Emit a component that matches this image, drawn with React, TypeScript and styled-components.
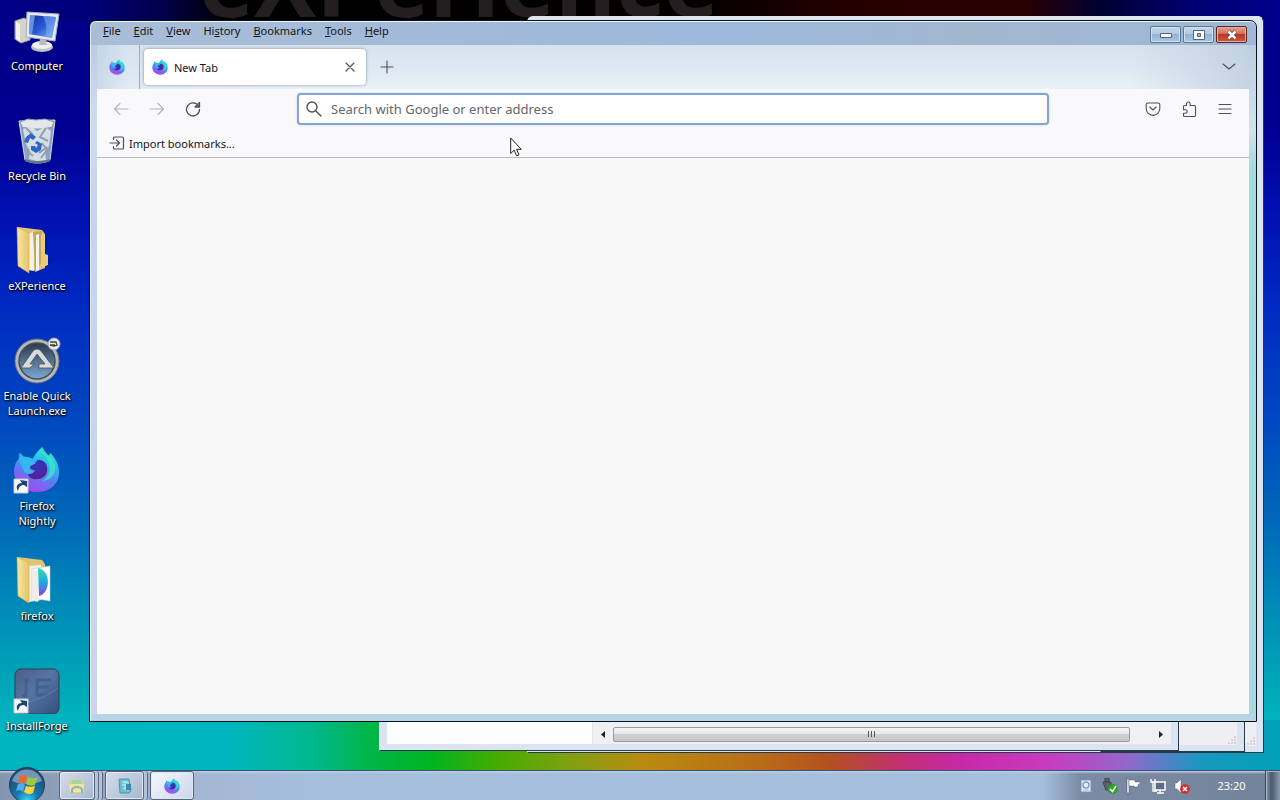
import React from 'react';
import styled, { createGlobalStyle } from 'styled-components';

const GlobalStyle = createGlobalStyle`
  *, *::before, *::after { box-sizing: border-box; }
  html, body { margin: 0; height: 100%; }
  body {
    font-family: "Noto Sans", "Open Sans", sans-serif;
    font-size: 11px;
    line-height: 15px;
    color: #15141a;
  }
  button {
    font: inherit;
    color: inherit;
    background: none;
    border: 0;
    padding: 0;
  }
`;

const Screen = styled.div`
  display: flex;
  flex-direction: column;
  min-height: 100vh;
  overflow: hidden;
`;

const Desktop = styled.main`
  position: relative;
  flex: 1;
  overflow: hidden;
  background:
    linear-gradient(to right, #00b4c0 0, #00b6be 230px, #00b890 310px, #00b648 370px, #00b420 430px, #48ac00 500px, #80a010 570px, #b88c10 640px, #b86c18 760px, #b45020 830px, #c03070 900px, #c828a8 960px, #c83cc0 1050px, #9068cc 1130px, #1898c0 1200px, #00a0b8 100%) no-repeat 0 100% / 100% 50px,
    linear-gradient(to right, #000088 0, #000078 90px, #00004c 160px, #000 230px, #050000 700px, #250000 850px, #2a0000 1020px, #000030 1100px, #000070 1190px, #00008c 100%) no-repeat 0 0 / 100% 22px,
    linear-gradient(to bottom, #000088 0, #000090 130px, #0010b0 210px, #0028c0 300px, #0048c0 420px, #0068b8 520px, #0090b8 620px, #00a8b8 690px, #00b2be calc(100% - 50px));
`;

const WallpaperText = styled.p`
  position: absolute;
  left: 199px;
  top: -79px;
  margin: 0;
  font-family: "Open Sans", sans-serif;
  font-size: 93px;
  line-height: 120px;
  font-weight: 700;
  color: #231f20;
`;

const IconColumn = styled.ul`
  position: relative;
  display: flex;
  flex-direction: column;
  width: 74px;
  margin: 0;
  padding: 6px 0 0;
  list-style: none;
`;

const IconCell = styled.li`
  height: 110px;
  &:last-child { height: auto; }
`;

const Shortcut = styled.button`
  display: flex;
  flex-direction: column;
  align-items: center;
  gap: 4px;
  width: 100%;
  color: #fff;
  text-align: center;
  text-shadow: 1px 1px 2px #000, 0 1px 2px #000;
  svg { display: block; }
`;

interface Frame { $left: number; $right: number; $top: number; $bottom: number }

const BackWindow = styled.section<Frame>`
  position: absolute;
  left: ${(p) => p.$left}px;
  right: ${(p) => p.$right}px;
  top: ${(p) => p.$top}px;
  bottom: ${(p) => p.$bottom}px;
  display: flex;
  flex-direction: column;
  justify-content: flex-end;
  padding: 7px 7px 6px;
  background: #dce3f1;
  border: 1px solid #26384c;
  border-left-color: #eef3fa;
  border-top-color: #dfe6e8;
  border-radius: 6px 6px 0 0;
`;

const StatusBar = styled.div`
  display: flex;
  justify-content: flex-end;
  align-items: flex-end;
  height: 24px;
  background: #eeeef3;
  svg { display: block; }
`;

const BottomRow = styled.div`
  display: flex;
  height: 22px;
  background: #fdfdfd;
`;

const TreePane = styled.div`
  flex: 0 0 206px;
  border-right: 1px solid #e4e4ea;
`;

const ScrollBar = styled.div`
  display: flex;
  flex: 1;
  align-items: center;
  padding: 2px 2px 0;
  background: #f0f0f2;
`;

const ScrollArrow = styled.button`
  display: flex;
  align-items: center;
  justify-content: center;
  width: 17px;
  height: 17px;
`;

const ScrollTrack = styled.div`
  display: flex;
  flex: 1;
  padding: 0 22px 0 1px;
`;

const ScrollThumb = styled.div`
  display: flex;
  flex: 1;
  align-items: center;
  justify-content: center;
  height: 15px;
  border: 1px solid #999a9e;
  border-radius: 2px;
  background: linear-gradient(#f4f4f4 0, #e8e8ea 45%, #cfcfd2 50%, #c6c6ca 100%);
`;

const Browser = styled.section`
  position: absolute;
  left: 89px;
  right: 23px;
  top: 20px;
  bottom: 48px;
  display: flex;
  flex-direction: column;
  padding: 0 7px 7px;
  border: 1px solid #0a121c;
  border-radius: 7px 7px 0 0;
  background:
    linear-gradient(#b8d5e8, #b8d5e8) no-repeat 0 100% / 100% 7px,
    linear-gradient(to right, #a9bdd6 0, #9fb9d9 40%, #9cb9dc 55%, #a2b6ce 75%, #9fb8d6 100%) no-repeat 0 0 / 100% 24px,
    linear-gradient(#b4c8de 0, #d3e2ee 110px, #a2dcdf 145px, #a4dbe0 100%) no-repeat 100% 0 / 8px 100%,
    linear-gradient(#b4c6dd 0, #cddceb 90px, #c8d4ea 200px, #ccd5ea 100%);
  box-shadow: inset 0 1px 0 #eef6fc, inset 1px 0 0 #e4edf6;
`;

const TitleBar = styled.header`
  display: flex;
  justify-content: space-between;
  height: 24px;
`;

const MenuBar = styled.nav`
  display: flex;
  gap: 1px;
  padding-top: 1px;
`;

const MenuItem = styled.button`
  height: 16px;
  padding: 0 6px;
  u { text-underline-offset: 1px; }
`;

const WindowButtons = styled.div`
  display: flex;
  gap: 2px;
  padding: 5px 2px 0 0;
`;

const WindowButton = styled.button<{ $close?: boolean }>`
  display: flex;
  align-items: center;
  justify-content: center;
  width: 31px;
  height: 17px;
  border: 1px solid ${(p) => (p.$close ? '#5c2226' : '#5b7896')};
  border-radius: 2px;
  background: ${(p) =>
    p.$close
      ? 'linear-gradient(#e2a092 0, #d2705c 45%, #b83824 50%, #cf5a42 100%)'
      : 'linear-gradient(#c4d7ea 0, #b2cae3 45%, #93b3d4 50%, #a9c8e2 100%)'};
  box-shadow: inset 0 0 0 1px ${(p) => (p.$close ? '#e9a99b' : '#cfe0ef')};
`;

const TabStrip = styled.div`
  display: flex;
  align-items: center;
  height: 44px;
  padding-right: 12px;
  background:
    linear-gradient(to right, rgba(190, 207, 228, 0.7) 0, rgba(214, 226, 240, 0.4) 30px, rgba(220, 232, 244, 0) 160px),
    linear-gradient(to left, rgba(190, 205, 222, 0.8) 0, rgba(214, 226, 238, 0) 120px),
    linear-gradient(#d6e3ee 0, #dde8f2 50%, #eaf1f8 100%);
`;

const PinnedTab = styled.button`
  display: flex;
  align-items: center;
  justify-content: center;
  width: 43px;
  height: 44px;
  padding-right: 2px;
  border-right: 1px solid #9fabbb;
`;

const Tab = styled.div`
  display: flex;
  align-items: center;
  width: 222px;
  height: 36px;
  margin-left: 4px;
  padding: 0 8px;
  border-radius: 4px;
  background: #fff;
  box-shadow: 0 0 3px rgba(60, 70, 90, 0.6);
`;

const TabTitle = styled.span`
  flex: 1;
  padding-left: 6px;
`;

const IconButton = styled.button<{ $size?: number; $faded?: boolean }>`
  display: flex;
  align-items: center;
  justify-content: center;
  width: ${(p) => p.$size ?? 36}px;
  height: ${(p) => p.$size ?? 36}px;
  color: ${(p) => (p.$faded ? '#b4b4b8' : '#505056')};
`;

const Spacer = styled.div`
  flex: 1;
`;

const Toolbar = styled.div`
  display: flex;
  align-items: center;
  height: 42px;
  padding: 0 6px 2px;
  background: #f9f9fb;
`;

const NavGroup = styled.div<{ $end?: boolean }>`
  display: flex;
  flex: 0 1 194px;
  justify-content: ${(p) => (p.$end ? 'flex-end' : 'flex-start')};
`;

const AddressBox = styled.label`
  display: flex;
  flex: 1;
  align-items: center;
  gap: 9px;
  height: 32px;
  padding: 0 7px;
  color: #505056;
  border: 2px solid #84a5d4;
  border-radius: 4px;
  background: #fff;
  box-shadow: 0 0 2px #b8c8ec;
`;

const AddressInput = styled.input`
  flex: 1;
  min-width: 0;
  padding: 0;
  border: 0;
  outline: 0;
  background: none;
  font: 13px/20px "Noto Sans", "Open Sans", sans-serif;
  &::placeholder { color: #66666c; opacity: 1; }
`;

const BookmarkBar = styled.div`
  display: flex;
  align-items: center;
  height: 27px;
  padding: 0 12px 2px;
  border-bottom: 1px solid #b9bac3;
  background: #f9f9fb;
`;

const BookmarkButton = styled.button`
  display: flex;
  align-items: center;
  gap: 4px;
  svg { color: #505056; }
`;

const Page = styled.div`
  flex: 1;
  background: #f8f8f9;
`;

const BrowserBody = styled.div`
  display: flex;
  flex: 1;
  flex-direction: column;
`;

const Cursor = styled.svg`
  position: absolute;
  left: 510px;
  top: 137px;
`;

const TaskBar = styled.footer`
  position: relative;
  display: flex;
  flex: 0 0 30px;
  height: 30px;
  border-top: 1px solid #35566e;
  background:
    linear-gradient(#c0cee6 0, transparent 3px),
    linear-gradient(to left, #74839b 0, #7b8ba5 200px, #a5bedc 236px, transparent 237px),
    linear-gradient(to right, #8495b0 0, #8c9db8 50px, #a4b6d2 190px, #a5bedc 300px);
`;

const StartButton = styled.button`
  width: 59px;
  height: 34px;
  margin-top: -5px;
  padding-left: 8px;
  svg { display: block; }
`;

const TaskButton = styled.button<{ $active?: boolean; $stacked?: boolean }>`
  display: flex;
  align-items: center;
  justify-content: center;
  width: ${(p) => (p.$active ? 44 : p.$stacked ? 39 : 36)}px;
  height: 29px;
  border: 1px solid #56677f;
  border-radius: 3px;
  background: ${(p) =>
    p.$active
      ? 'linear-gradient(135deg, #f4f7fc, #ccd7ea)'
      : 'linear-gradient(135deg, #d3dcea, #a9b8cf)'};
  box-shadow: inset 0 0 0 1px #dfe8f4;
`;

const StackEdge = styled.span`
  width: 4px;
  height: 29px;
  border-right: 1px solid #5c6c84;
  border-radius: 0 3px 3px 0;
  background: #b4c1d6;
`;

const TaskGroup = styled.div`
  display: flex;
  margin-right: 2px;
`;

const Tray = styled.div`
  display: flex;
  align-items: center;
  gap: 8px;
`;

const TrayButton = styled.button`
  display: flex;
  width: 16px;
  height: 16px;
`;

const Clock = styled.time`
  width: 67px;
  color: #fff;
  text-align: center;
`;

const ShowDesktop = styled.button`
  width: 15px;
  height: 29px;
  border-left: 1px solid #3e4a5c;
  background: linear-gradient(to right, #8795a9, #4d5a6c 40%, #8d9bb0);
  box-shadow: inset 1px 1px 0 #a9b6c8;
`;

function FirefoxIcon({ size, id }: { size: number; id: string }) {
  return (
    <svg width={size} height={size} viewBox="0 0 48 48" aria-hidden="true">
      <defs>
        <linearGradient id={`${id}-body`} x1="0.75" y1="0" x2="0.3" y2="1">
          <stop offset="0" stopColor="#3df0b4" />
          <stop offset="0.3" stopColor="#22c4f0" />
          <stop offset="0.6" stopColor="#5a7cf4" />
          <stop offset="1" stopColor="#b040f0" />
        </linearGradient>
        <radialGradient id={`${id}-core`} cx="0.5" cy="0.3" r="0.7">
          <stop offset="0" stopColor="#3038b8" />
          <stop offset="1" stopColor="#5a1c98" />
        </radialGradient>
      </defs>
      <path
        d="M30 1c1 4 3 6 6 9 2-1 2-2 2-3 5 5 9 12 9 20 0 12-10 20-22 20S1 38 1 26c0-6 2-10 5-13 0-2 0-4 1-6 2 2 4 4 5 5 3-1 6 0 8 1 3-5 6-9 10-12z"
        fill={`url(#${id}-body)`}
      />
      <path d="M25 14c7 0 10 4 10 10 0 6-5 10-11 10-6 0-9-3-9-8 3 2 6 1 8-1-3 0-6-2-7-5 4-1 7-2 9-6z" fill={`url(#${id}-core)`} />
      <path d="M6 13c2-3 6-3 10-1 3 1 6 3 7 6-3 1-6 2-6 5 0 2 3 3 5 3-4 4-9 3-11-1-2-4-3-8-5-12z" fill="#35b8f0" />
      <path d="M30 1c-1 6 5 10 7 17 2 8-2 14-7 18 9-1 14-7 13-16C42 12 33 9 30 1z" fill="#44e8c8" opacity="0.7" />
    </svg>
  );
}

const ShortcutArrow = () => (
  <g>
    <path d="M1 33h14v14H1z" fill="#f4f6f8" stroke="#c4ccd4" strokeWidth="1" />
    <path d="M5 45c-3-5 0-8 4-8l-2-3 7 1v6l-3-2c-4 0-5 2-6 6z" fill="#1c4278" />
  </g>
);

const ComputerIcon = () => (
  <svg width="48" height="48" viewBox="0 0 48 48" aria-hidden="true">
    <defs>
      <linearGradient id="screen" x1="0" y1="0" x2="1" y2="1">
        <stop offset="0" stopColor="#102a9c" /><stop offset="0.5" stopColor="#2858d4" /><stop offset="1" stopColor="#8cc4fa" />
      </linearGradient>
    </defs>
    <path d="M2 15l9-3 6 3v19l-9 3-6-4z" fill="#d4d4cc" stroke="#9a9c98" />
    <path d="M3 16l4 2v18l-4-3z" fill="#f2f2ea" />
    <ellipse cx="29" cy="41" rx="11" ry="5" fill="#c0c4c4" />
    <ellipse cx="29" cy="39" rx="10" ry="4" fill="#f0f0ea" />
    <path d="M27 33h6l1 6h-8z" fill="#b8bcc4" />
    <path d="M14 6l32 2-4 27-29-4z" fill="#e6eaee" stroke="#a4acb8" />
    <path d="M17 9l26 2-4 21-23-4z" fill="url(#screen)" />
    <path d="M17 9l5 0-3 19.500-3-.5z" fill="#88b4f0" opacity="0.7" />
    <path d="M30 10l13 1-4 21-7-1c3-8 1-14-2-21z" fill="#7caaf4" opacity="0.6" />
  </svg>
);

const BinIcon = () => (
  <svg width="48" height="48" viewBox="0 0 48 48" aria-hidden="true">
    <path d="M6 5l36-1-5 40c-5 4-20 4-25 0z" fill="#a8bccc" fillOpacity="0.85" stroke="#d4dfe8" />
    <path d="M7 6l8-3 8 1 9-1 9 3-2 5-9 2-12 0-9-2z" fill="#e4e8ea" stroke="#8c9ca8" />
    <path d="M10 13l8-3 6 5 8-4 6 4-2 15-4 5 1 9-9 1-8-2 1-8-4-7z" fill="#dde4e6" opacity="0.9" />
    <path d="M13 12l6 6-5 4M33 12l-6 9 8 4M26 37l8-6M14 35l6 5M29 27l5 7-6 8" stroke="#8ea0ae" strokeWidth="2" fill="none" />
    <path d="M13 21l5-4 5 4-3 3-3-2-2 5-4-1zM24 25l5 3-1 6-5 3-5-3v-4h4l1 2 2-3-3-2z" fill="#2c64cc" />
    <path d="M12 44c6 3 19 3 25 0" stroke="#607484" strokeWidth="2" fill="none" />
  </svg>
);

const FolderIcon = ({ firefox }: { firefox?: boolean }) => (
  <svg width="48" height="48" viewBox="0 0 48 48" aria-hidden="true">
    <defs>
      <linearGradient id="folder" x1="0" y1="0" x2="1" y2="0">
        <stop offset="0" stopColor="#f8e8a0" /><stop offset="1" stopColor="#e4c46c" />
      </linearGradient>
      <linearGradient id="disc" x1="0" y1="0" x2="0" y2="1">
        <stop offset="0" stopColor="#30e0b0" /><stop offset="0.5" stopColor="#20a8e0" /><stop offset="1" stopColor="#9040e0" />
      </linearGradient>
    </defs>
    {!firefox && <path d="M34 34l8-3-8 10z" fill="#001858" opacity="0.25" />}
    <path d="M5 1l24 3 3 4v34l-10 4z" fill="#e0c474" />
    {firefox ? (
      <>
        <path d="M14 10l14-1v35l-12 2z" fill="#f4eee8" />
        <path d="M19 13l18-3v35l-12-2-6 2z" fill="#fff" stroke="#c8ccd0" strokeWidth="0.6" />
        <path d="M25 12c13 2 13 25 1 28z" fill="url(#disc)" />
        <path d="M19 13l6 2v31l-6-3z" fill="#f0ece8" />
      </>
    ) : (
      <>
        <path d="M15 8l6-3v40l-6-1z" fill="#f8efd0" />
        <path d="M20 6l9-1v30l-7 11z" fill="#c8a850" />
        <path d="M18 8l2-1v36l-2 1zM23 9l3-1v36l-3 1z" fill="#eff4f7" />
        <path d="M28 8l4 2v18l3 1v10l-7 3z" fill="#e8cc7c" />
      </>
    )}
    <path d="M4 1l12 6v40L5 40z" fill="url(#folder)" stroke="#d4b458" strokeWidth="0.6" />
  </svg>
);

const AutoItIcon = () => (
  <svg width="48" height="48" viewBox="0 0 48 48" aria-hidden="true">
    <defs>
      <linearGradient id="autoit" x1="0" y1="0" x2="0" y2="1">
        <stop offset="0" stopColor="#2c3a4c" /><stop offset="1" stopColor="#7ca8d4" />
      </linearGradient>
    </defs>
    <circle cx="24" cy="25" r="22" fill="#b4b8b8" stroke="#6c7078" />
    <circle cx="24" cy="25" r="18" fill="url(#autoit)" stroke="#454d58" strokeWidth="1.500" />
    <path d="M8 32l12-17q4-4 8 0l13 17h-15v-4h6l-8-10-7 10h4l-4 4z" fill="#d8dadb" stroke="#4a5058" strokeWidth="0.8" />
    <circle cx="41" cy="8" r="6" fill="#e4e8ea" stroke="#a4a8ac" />
    <path d="M37 6h6l1 3-3 1-4-1h5" stroke="#444" strokeWidth="1.300" fill="none" />
  </svg>
);

const FirefoxShortcutIcon = () => (
  <svg width="48" height="48" viewBox="0 0 48 48" aria-hidden="true">
    <g><FirefoxIcon size={47} id="desk" /></g>
    <ShortcutArrow />
  </svg>
);

const ForgeIcon = () => (
  <svg width="48" height="48" viewBox="0 0 48 48" aria-hidden="true">
    <defs>
      <linearGradient id="forge" x1="0" y1="0" x2="1" y2="1">
        <stop offset="0" stopColor="#4c6084" /><stop offset="0.45" stopColor="#5474a4" /><stop offset="1" stopColor="#34507c" />
      </linearGradient>
    </defs>
    <rect x="2" y="3" width="44" height="45" rx="6" fill="url(#forge)" stroke="#2c3c58" />
    <path d="M10 14h6M13 14v16h-4M38 14H24v15h12M24 21h12" stroke="#45608c" strokeWidth="3" fill="none" />
    <path d="M4 38c14-2 28-6 41-16" stroke="#7890b8" strokeWidth="1" fill="none" opacity="0.5" />
    <ShortcutArrow />
  </svg>
);

const Grip = () => (
  <svg width="10" height="10" viewBox="0 0 10 10" aria-hidden="true">
    <path d="M7 1h2v2H7zM4 4h2v2H4zM7 4h2v2H7zM1 7h2v2H1zM4 7h2v2H4zM7 7h2v2H7z" fill="#dccfd4" />
  </svg>
);

const Line = ({ d, size = 16, width = 1.1 }: { d: string; size?: number; width?: number }) => (
  <svg width={size} height={size} viewBox="0 0 16 16" fill="none" stroke="currentColor" strokeWidth={width} strokeLinecap="round" strokeLinejoin="round" aria-hidden="true">
    <path d={d} />
  </svg>
);

const shortcuts = [
  { label: 'Computer', icon: <ComputerIcon /> },
  { label: 'Recycle Bin', icon: <BinIcon /> },
  { label: 'eXPerience', icon: <FolderIcon /> },
  { label: 'Enable Quick Launch.exe', icon: <AutoItIcon /> },
  { label: 'Firefox Nightly', icon: <FirefoxShortcutIcon /> },
  { label: 'firefox', icon: <FolderIcon firefox /> },
  { label: 'InstallForge', icon: <ForgeIcon /> },
];

const menus: [string, string, string][] = [
  ['', 'F', 'ile'],
  ['', 'E', 'dit'],
  ['', 'V', 'iew'],
  ['Hi', 's', 'tory'],
  ['', 'B', 'ookmarks'],
  ['', 'T', 'ools'],
  ['', 'H', 'elp'],
];

export default function App() {
  return (
    <Screen>
      <GlobalStyle />
      <Desktop>
        <WallpaperText>eXPerience</WallpaperText>
        <IconColumn>
          {shortcuts.map((s) => (
            <IconCell key={s.label}>
              <Shortcut>{s.icon}{s.label}</Shortcut>
            </IconCell>
          ))}
        </IconColumn>

        <BackWindow $left={527} $right={16} $top={16} $bottom={17}>
          <StatusBar><Grip /></StatusBar>
        </BackWindow>
        <BackWindow $left={1100} $right={35} $top={22} $bottom={18}>
          <StatusBar><Grip /></StatusBar>
        </BackWindow>
        <BackWindow $left={379} $right={101} $top={60} $bottom={19}>
          <BottomRow>
            <TreePane />
            <ScrollBar>
              <ScrollArrow aria-label="Scroll left">
                <svg width="5" height="7" viewBox="0 0 5 7"><path d="M4 0v7L0 3.500z" fill="#222" /></svg>
              </ScrollArrow>
              <ScrollTrack>
                <ScrollThumb>
                  <svg width="9" height="7" viewBox="0 0 9 7"><path d="M1.500 0v6M4.500 0v6M7.500 0v6" stroke="#555" /></svg>
                </ScrollThumb>
              </ScrollTrack>
              <ScrollArrow aria-label="Scroll right">
                <svg width="5" height="7" viewBox="0 0 5 7"><path d="M1 0v7l4-3.500z" fill="#222" /></svg>
              </ScrollArrow>
            </ScrollBar>
          </BottomRow>
        </BackWindow>

        <Browser>
          <TitleBar>
            <MenuBar>
              {menus.map(([before, key, after]) => (
                <MenuItem key={key + after}>{before}<u>{key}</u>{after}</MenuItem>
              ))}
            </MenuBar>
            <WindowButtons>
              <WindowButton aria-label="Minimize">
                <svg width="12" height="6" viewBox="0 0 12 6"><path d="M.5 1.500h11v4H.5z" fill="#fff" stroke="#53657c" /></svg>
              </WindowButton>
              <WindowButton aria-label="Maximize">
                <svg width="12" height="10" viewBox="0 0 12 10"><path d="M.5.5h11v9H.5z" fill="#fff" stroke="#53657c" /><path d="M4.500 3.500h3v3h-3z" fill="#9cbad8" stroke="#53657c" /></svg>
              </WindowButton>
              <WindowButton $close aria-label="Close">
                <svg width="12" height="10" viewBox="0 0 12 10"><path d="M2.500 1.500l7 7M9.500 1.500l-7 7" stroke="#6a3030" strokeWidth="4" /><path d="M2.500 1.500l7 7M9.500 1.500l-7 7" stroke="#fff" strokeWidth="2.600" /></svg>
              </WindowButton>
            </WindowButtons>
          </TitleBar>
          <BrowserBody>
            <TabStrip>
              <PinnedTab aria-label="Firefox View"><FirefoxIcon size={16} id="view" /></PinnedTab>
              <Tab>
                <FirefoxIcon size={16} id="tab" />
                <TabTitle>New Tab</TabTitle>
                <IconButton $size={16} aria-label="Close tab"><Line d="M4 4l8 8M12 4l-8 8" width={1.2} /></IconButton>
              </Tab>
              <IconButton $size={42} aria-label="New tab"><Line d="M8 2v12M2 8h12" /></IconButton>
              <Spacer />
              <IconButton $size={16} aria-label="List all tabs"><Line d="M2 5l6 5 6-5" /></IconButton>
            </TabStrip>
            <Toolbar>
              <NavGroup>
                <IconButton $faded aria-label="Back"><Line d="M15 8H1.500M7 2.500L1.500 8 7 13.500" /></IconButton>
                <IconButton $faded aria-label="Forward"><Line d="M1 8h13.500M9 2.500L14.500 8 9 13.500" /></IconButton>
                <IconButton aria-label="Reload"><Line d="M13.500 5A6.500 6.500 0 1 0 14.500 8.500M14.500 1.500v4.500h-4.500z" width={1.3} /></IconButton>
              </NavGroup>
              <AddressBox>
                <Line d="M6 1a5 5 0 1 0 0 10a5 5 0 1 0 0-10M9.700 9.700L15 15" width={1.4} />
                <AddressInput aria-label="Address" placeholder="Search with Google or enter address" />
              </AddressBox>
              <NavGroup $end>
                <IconButton aria-label="Save to Pocket"><Line d="M2.800 2h10.400a1.600 1.600 0 0 1 1.600 1.600v4a6.800 6.800 0 0 1-13.600 0v-4A1.600 1.600 0 0 1 2.800 2zM4.800 6L8 9l3.200-3" /></IconButton>
                <IconButton aria-label="Extensions"><Line d="M5.500 4.500V2.800a1.800 1.800 0 0 1 3.600 0v1.700h4.400a1 1 0 0 1 1 1v9a1 1 0 0 1-1 1h-10a1 1 0 0 1-1-1v-2.300h2a1.700 1.700 0 0 0 0-3.400h-2V5.500a1 1 0 0 1 1-1z" /></IconButton>
                <IconButton aria-label="Application menu"><Line d="M2 3.500h12M2 8h12M2 12.500h12" /></IconButton>
              </NavGroup>
            </Toolbar>
            <BookmarkBar>
              <BookmarkButton>
                <Line d="M4.500 4.500V3a1 1 0 0 1 1-1h8a1 1 0 0 1 1 1v10a1 1 0 0 1-1 1h-8a1 1 0 0 1-1-1v-1.500M1 8h9.500M7.500 5l3 3-3 3" width={1.2} />
                Import bookmarks...
              </BookmarkButton>
            </BookmarkBar>
            <Page />
          </BrowserBody>
        </Browser>

        <Cursor width="12" height="20" viewBox="0 0 12 20" aria-hidden="true">
          <path d="M.7 1v15.500l3.500-3.300 2.400 5.600 2.400-1-2.400-5.500h4.700z" fill="#fff" stroke="#222" />
        </Cursor>
      </Desktop>

      <TaskBar>
        <StartButton aria-label="Start">
          <svg width="38" height="34" viewBox="0 0 38 34" aria-hidden="true">
            <defs>
              <radialGradient id="orb" cx="0.5" cy="0.95" r="0.8">
                <stop offset="0" stopColor="#3cd8fc" /><stop offset="0.4" stopColor="#1878b0" /><stop offset="1" stopColor="#1c4a74" />
              </radialGradient>
            </defs>
            <circle cx="19" cy="19" r="17.500" fill="url(#orb)" stroke="#1e3c5c" />
            <path d="M4 15a15.500 15.500 0 0 1 30 0c-8 4-22 4-30 0z" fill="#b4c8d8" opacity="0.6" />
            <path d="M12 10c3-1 5-1 7 1l-2 7c-2-2-5-2-7-1z" fill="#f06428" />
            <path d="M20 11c3 2 6 2 9 0l-2 8c-3 1-6 1-9-1z" fill="#9ccc40" />
            <path d="M10 18c3-1 5-1 7 1l-2 7c-2-2-5-2-7-1z" fill="#4cacec" />
            <path d="M18 20c3 1 6 1 9 0l-2 7c-3 2-6 1-9-1z" fill="#fcd43c" />
          </svg>
        </StartButton>
        <TaskGroup>
          <TaskButton aria-label="Explorer">
            <svg width="18" height="18" viewBox="0 0 18 18" aria-hidden="true">
              <path d="M2 3h6l1 2h7v11H2z" fill="#e6cf70" /><path d="M4 3h9v5H4z" fill="#a8d498" />
              <path d="M1 7h15l-1 8H2z" fill="#f3e49c" /><path d="M4 16v-3a5 3 0 0 1 10 0v3" fill="none" stroke="#80b8c8" strokeWidth="2" />
            </svg>
          </TaskButton>
          <StackEdge /><StackEdge />
        </TaskGroup>
        <TaskGroup>
          <TaskButton $stacked aria-label="Registry Editor">
            <svg width="18" height="18" viewBox="0 0 18 18" aria-hidden="true">
              <path d="M3 2h10l2 12-2 2H4z" fill="#68c0d0" stroke="#4c94ac" />
              <path d="M6 5h6M6 8h7M7 11h6M9 4v9M12 5v9" stroke="#c4ecf4" /><path d="M10 7h5v6h-5z" fill="#3c88b0" />
            </svg>
          </TaskButton>
          <StackEdge />
        </TaskGroup>
        <TaskButton $active aria-label="Firefox Nightly"><FirefoxIcon size={16} id="task" /></TaskButton>
        <Spacer />
        <Tray>
          <TrayButton aria-label="Notes">
            <svg width="16" height="16" viewBox="0 0 16 16"><path d="M3 2h10v12H3z" fill="#e8f0fa" stroke="#7c94b4" /><circle cx="8" cy="7" r="3" fill="none" stroke="#7ca0cc" strokeWidth="1.500" /><path d="M5 12h6" stroke="#9cb4d0" /></svg>
          </TrayButton>
          <TrayButton aria-label="Safely remove hardware">
            <svg width="16" height="16" viewBox="0 0 16 16"><path d="M3 0h4v4H3zM1 4h8v8H4z" fill="#5c6470" stroke="#3c444c" /><circle cx="11" cy="11" r="5" fill="#2ca424" /><path d="M8 11l2.500 2.500L14 8" stroke="#fff" strokeWidth="1.600" fill="none" /></svg>
          </TrayButton>
          <TrayButton aria-label="Action center">
            <svg width="16" height="16" viewBox="0 0 16 16"><path d="M1 1h2v14H1z" fill="#fff" stroke="#3c4858" strokeWidth="0.500" /><path d="M3 2h6v2h6l-3 3v2H8V8H3z" fill="#fff" stroke="#4c586c" strokeWidth="0.500" /></svg>
          </TrayButton>
          <TrayButton aria-label="Network">
            <svg width="16" height="16" viewBox="0 0 16 16"><path d="M5 4h10v8H5z" fill="#5c6c84" stroke="#fff" strokeWidth="1.500" /><path d="M1 1v3h4V1M3 4v9h4M7 15h7M10 12v3" stroke="#fff" strokeWidth="1.300" fill="none" /></svg>
          </TrayButton>
          <TrayButton aria-label="Volume muted">
            <svg width="16" height="16" viewBox="0 0 16 16"><path d="M1 5h2l4-4v14l-4-4H1z" fill="#fff" stroke="#4c586c" strokeWidth="0.500" /><circle cx="11" cy="11" r="4.800" fill="#d42c2c" /><path d="M9 9l4 4M13 9l-4 4" stroke="#fff" strokeWidth="1.500" /></svg>
          </TrayButton>
          <Clock>23:20</Clock>
        </Tray>
        <ShowDesktop aria-label="Show desktop" />
      </TaskBar>
    </Screen>
  );
}
